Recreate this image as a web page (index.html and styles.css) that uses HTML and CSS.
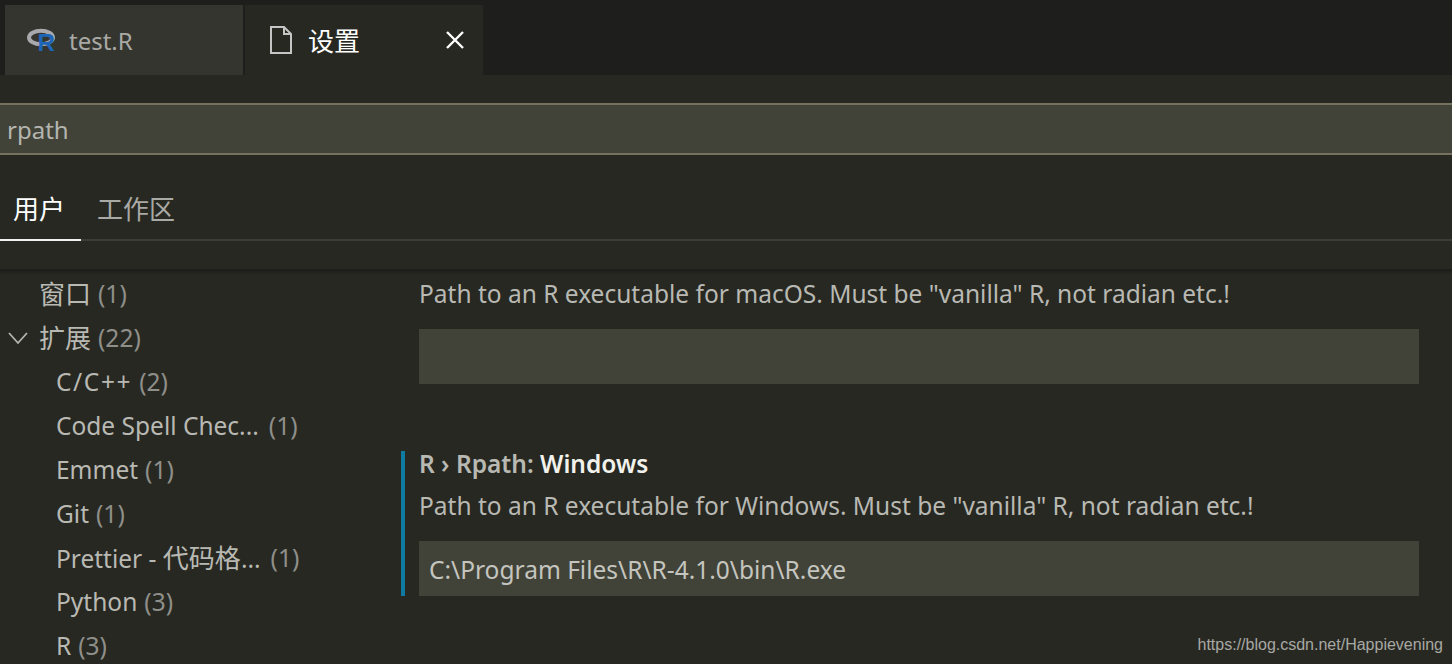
FILE: index.html
```html
<!DOCTYPE html>
<html lang="en">
<head>
    <meta charset="UTF-8">
    <meta name="viewport" content="width=device-width, initial-scale=1.0">
    <title>设置</title>
    <link rel="stylesheet" href="styles.css">
</head>
<body>
    <header class="tabbar">
        <div class="tab">
            <svg class="r-logo" width="32" height="32" viewBox="0 0 32 32">
                <ellipse cx="14" cy="13.5" rx="12" ry="6.8" fill="none" stroke="#a9a9ad" stroke-width="4"/>
                <text x="10.5" y="27" class="r-letter">R</text>
            </svg>
            <span class="tab-label">test.R</span>
        </div>
        <div class="tab active">
            <svg class="file-icon" width="24" height="30" viewBox="0 0 24 30">
                <path d="M2 2H15L22 9V28H2Z M15 2V9H22" fill="none" stroke="#c5c5c5" stroke-width="2"/>
            </svg>
            <span class="cjk">设置</span>
            <svg class="close-icon" width="20" height="20" viewBox="0 0 20 20">
                <path d="M2 2L18 18M18 2L2 18" fill="none" stroke="#fff" stroke-width="2.4"/>
            </svg>
        </div>
    </header>

    <div class="search-wrap">
        <div class="search-box">rpath</div>
    </div>

    <nav class="scope-tabs">
        <div class="scope active cjk">用户</div>
        <div class="scope cjk">工作区</div>
    </nav>

    <div class="main">
        <!-- settings tree -->
        <ul class="tree">
            <li class="top"><span class="cjk">窗口</span><span class="count">(1)</span></li>
            <li class="top">
                <svg class="chevron" width="22" height="14" viewBox="0 0 22 14">
                    <path d="M2 2L11 12L20 2" fill="none" stroke="#b5b5b0" stroke-width="1.8"/>
                </svg>
                <span class="cjk">扩展</span><span class="count">(22)</span>
            </li>
            <li><span class="wide">C/C++</span><span class="count">(2)</span></li>
            <li><span>Code Spell Chec...</span><span class="count gap">(1)</span></li>
            <li><span>Emmet</span><span class="count">(1)</span></li>
            <li><span>Git</span><span class="count">(1)</span></li>
            <li><span>Prettier - <span class="cjk">代码格</span>...</span><span class="count gap">(1)</span></li>
            <li><span>Python</span><span class="count">(3)</span></li>
            <li><span>R</span><span class="count">(3)</span></li>
        </ul>

        <div class="settings">
            <section class="setting">
                <p class="desc">Path to an R executable for macOS. Must be "vanilla" R, not radian etc.!</p>
                <div class="value"></div>
            </section>
            <section class="setting focused">
                <h3 class="name">R › Rpath: <strong>Windows</strong></h3>
                <p class="desc">Path to an R executable for Windows. Must be "vanilla" R, not radian etc.!</p>
                <div class="value">C:\Program Files\R\R-4.1.0\bin\R.exe</div>
            </section>
        </div>
    </div>

    <div class="watermark">https://blog.csdn.net/Happievening</div>
</body>
</html>
```

FILE: styles.css
```css
/* Global styles */
html, body {
    height: 100%;
}

body {
    margin: 0;
    overflow: hidden;
    position: relative;
    background-color: #272822;
    color: #b9b9b3;
    font-family: "Noto Sans", "Noto Sans CJK SC", sans-serif;
    font-size: 24.5px;
}

.cjk {
    font-size: 26px;
}

/* Editor tabs */
.tabbar {
    display: flex;
    gap: 2px;
    height: 70px;
    padding: 5px 0 0 5px;
    background-color: #1e1f1c;
}

.tab {
    display: flex;
    align-items: center;
    width: 238px;
    box-sizing: border-box;
    padding-left: 22px;
    background-color: #34352f;
    color: #a9aaa5;
}

.tab.active {
    background-color: #272822;
    color: #fff;
}

.tab-label {
    font-size: 24px;
}

.r-logo {
    margin-right: 10px;
}

.r-letter {
    font-family: "Liberation Sans", sans-serif;
    font-size: 24px;
    font-weight: bold;
    fill: #1f65b7;
}

.file-icon {
    margin: 0 15px 0 2px;
}

.close-icon {
    margin-left: auto;
    margin-right: 18px;
}

/* Search box */
.search-wrap {
    padding-top: 28px;
}

.search-box {
    height: 48px;
    line-height: 50px;
    padding-left: 7px;
    background-color: #414339;
    border-top: 2px solid #75715e;
    border-bottom: 2px solid #75715e;
    color: #b5b5b0;
    font-size: 24px;
}

/* User / workspace tabs */
.scope-tabs {
    display: flex;
    margin-top: 32px;
    height: 52px;
    border-bottom: 2px solid #3c3d38;
}

.scope {
    padding: 0 0 0 16px;
    line-height: 44px;
    color: #a9a9a5;
}

.scope.active {
    width: 81px;
    box-sizing: border-box;
    padding-left: 13px;
    color: #fff;
    height: 54px;
    border-bottom: 2px solid #f0f0f0;
}

/* Main area */
.main {
    display: flex;
    margin-top: 28px;
    padding-top: 2px;
    height: 400px;
    background: linear-gradient(#1b1c18, #272822) top / 100% 6px no-repeat;
}

.tree {
    width: 401px;
    flex-shrink: 0;
    margin: 0;
    padding: 0;
    list-style: none;
}

.tree li {
    display: flex;
    align-items: center;
    gap: 7px;
    height: 44px;
    padding-left: 56px;
    white-space: nowrap;
}

.tree li.top {
    padding-left: 39px;
    position: relative;
}

.wide {
    letter-spacing: 1.6px;
}

.count {
    color: #8f8f8a;
}

.count.gap {
    margin-left: 3px;
}

.chevron {
    position: absolute;
    left: 7px;
    top: 16px;
}

/* Settings list */
.settings {
    flex: 1;
    padding-right: 33px;
}

.setting {
    padding-left: 14px;
    border-left: 4px solid transparent;
}

.setting.focused {
    margin-top: 67px;
    border-left-color: #0f7ba3;
}

.name {
    margin: 0;
    font-size: 24.5px;
    font-weight: 600;
    line-height: 26px;
    color: #b9b9b3;
}

.name strong {
    font-weight: 600;
    color: #f2f2ec;
}

.desc {
    margin: 0;
    line-height: 46px;
}

.focused .desc {
    margin-top: 6px;
}

.value {
    height: 55px;
    line-height: 58px;
    margin-top: 12px;
    padding-left: 10px;
    background-color: #414339;
    color: #c5c5bf;
}

.watermark {
    position: absolute;
    right: 9px;
    bottom: 10px;
    font-family: "Liberation Sans", sans-serif;
    font-size: 16px;
    color: #a8a8a4;
}
```
